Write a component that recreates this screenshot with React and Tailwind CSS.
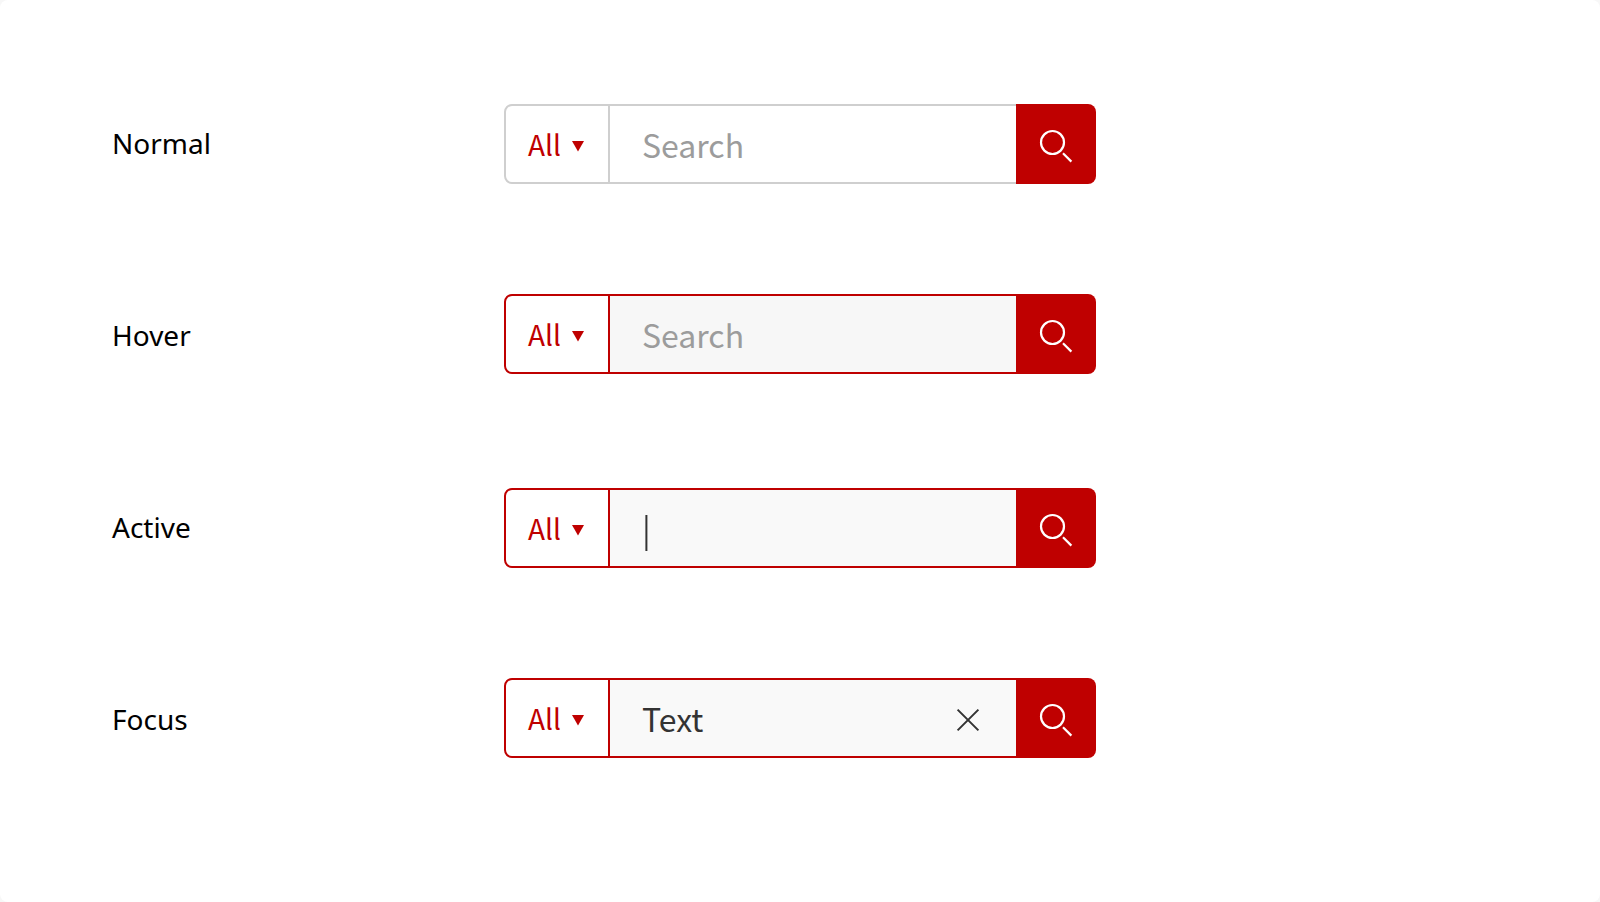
const RED_BORDER = 'border-[#bf0000]';

const FIELDS = [
  { label: 'Normal', gap: 'mt-0', border: 'border-[#cfcfcf]', fill: 'bg-white', kind: 'placeholder' },
  { label: 'Hover', gap: 'mt-[110px]', border: RED_BORDER, fill: 'bg-[#f7f7f7]', kind: 'placeholder' },
  { label: 'Active', gap: 'mt-[114px]', border: RED_BORDER, fill: 'bg-[#f9f9f9]', kind: 'caret' },
  { label: 'Focus', gap: 'mt-[110px]', border: RED_BORDER, fill: 'bg-[#f9f9f9]', kind: 'value' },
];

function CloseIcon() {
  return (
    <svg className="mt-1 size-6" viewBox="0 0 24 24" fill="none" stroke="#333333" strokeWidth="2">
      <path d="M1.6 1.6L22.4 22.4M22.4 1.6L1.6 22.4" />
    </svg>
  );
}

function SearchIcon() {
  return (
    <svg className="size-20" viewBox="0 0 80 80" fill="none" stroke="#ffffff" strokeWidth="2.2">
      <circle cx="36.5" cy="38.5" r="11.5" />
      <path d="M47 49.3L55.4 57.6" />
    </svg>
  );
}

function SearchField({ gap, border, fill, kind }) {
  return (
    <div className={`flex h-20 w-[592px] shrink-0 font-['Noto_Sans_CJK_SC','Noto_Sans_CJK_JP',sans-serif] ${gap}`}>
      <div className={`flex w-[106px] items-center rounded-l-lg border-2 bg-white pl-[22px] text-[#bf0000] ${border}`}>
        <span className="w-11 text-[28px] leading-10">All</span>
        <svg className="mt-1 h-3 w-3" viewBox="0 0 12 12" fill="#bf0000">
          <path d="M0 1H12L6 11.6Z" />
        </svg>
      </div>
      <div className={`flex w-[406px] items-center justify-between border-y-2 pl-8 pr-9 text-[32px] leading-10 ${border} ${fill}`}>
        {kind === 'placeholder' && <span className="text-[#9c9c9c]">Search</span>}
        {kind === 'caret' && (
          <svg className="mt-2.5 h-9 w-6" viewBox="0 0 24 36">
            <path d="M4.4 0V36" stroke="#333333" strokeWidth="2" />
          </svg>
        )}
        {kind === 'value' && (
          <>
            <span className="text-[#333333]">Text</span>
            <CloseIcon />
          </>
        )}
      </div>
      <div className="size-20 rounded-r-lg bg-[#bf0000]">
        <SearchIcon />
      </div>
    </div>
  );
}

export default function App() {
  return (
    <div className="h-[902px] w-full overflow-hidden bg-[#f7f7f7]">
      <main className="flex h-full rounded-lg bg-white">
        <div className="flex w-[504px] flex-col gap-[152px] pl-28 pt-[123px] font-['Noto_Sans','Open_Sans',sans-serif] text-[28px] leading-10 text-black">
          {FIELDS.map(({ label }) => (
            <span key={label}>{label}</span>
          ))}
        </div>
        <div className="flex flex-col pt-[104px]">
          {FIELDS.map((field) => (
            <SearchField key={field.label} {...field} />
          ))}
        </div>
      </main>
    </div>
  );
}
